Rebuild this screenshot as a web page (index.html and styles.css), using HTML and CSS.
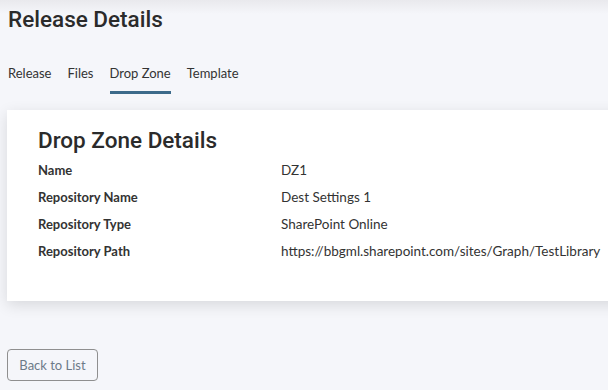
FILE: index.html
```html
<!DOCTYPE html>
<html lang="en">

<head>
    <meta charset="UTF-8">
    <meta name="viewport" content="width=device-width, initial-scale=1.0">
    <title>Release Details</title>
    <link rel="stylesheet" href="styles.css">
</head>

<body>
    <div class="pageWrapper">
        <h1 class="pageTitle">Release Details</h1>

        <!-- Abas -->
        <nav class="tabs">
            <a class="tab">Release</a>
            <a class="tab">Files</a>
            <a class="tab active">Drop Zone</a>
            <a class="tab">Template</a>
        </nav>

        <div class="card">
            <h2 class="cardTitle">Drop Zone Details</h2>
            <dl class="details">
                <dt>Name</dt>
                <dd>DZ1</dd>
                <dt>Repository Name</dt>
                <dd>Dest Settings 1</dd>
                <dt>Repository Type</dt>
                <dd>SharePoint Online</dd>
                <dt>Repository Path</dt>
                <dd>https://bbgml.sharepoint.com/sites/Graph/TestLibrary</dd>
            </dl>
        </div>

        <button class="backButton">Back to List</button>
    </div>
</body>

</html>
```

FILE: styles.css
```css
html,
body {
    margin: 0;
    height: 100%;
    overflow: hidden;
}

body {
    font-family: Lato, "Open Sans", sans-serif;
    font-size: 13px;
    color: #333;
    background: linear-gradient(#e9e9ed 0, #f5f6fa 14px) no-repeat;
    background-color: #f5f6fa;
}

.pageWrapper {
    padding: 0 7px;
    width: 594px;
}

.pageTitle {
    font-family: Roboto, sans-serif;
    font-weight: 500;
    font-size: 22.5px;
    color: #2b2b2b;
    margin: 0;
    padding: 6px 0 0 1px;
    line-height: 26px;
}

/* Abas */
.tabs {
    display: flex;
    gap: 16px;
    margin-top: 33px;
    padding-left: 1px;
}

.tab {
    color: #333;
    line-height: 16px;
    padding-bottom: 10px;
    border-bottom: 3px solid transparent;
    cursor: pointer;
}

.tab.active {
    border-bottom-color: #3c6a8a;
}

.card {
    background-color: #fff;
    margin-top: 16px;
    margin-right: -40px;
    padding: 16px 31px 42px;
    box-shadow: 0 4px 14px rgba(0, 0, 0, 0.12);
}

.cardTitle {
    font-family: Roboto, sans-serif;
    font-weight: 500;
    font-size: 22.5px;
    color: #2b2b2b;
    margin: 0;
    line-height: 28px;
}

.details {
    display: grid;
    grid-template-columns: 243px 1fr;
    row-gap: 11px;
    margin: 8px 0 0;
    line-height: 16px;
}

.details dt {
    font-weight: bold;
}

.details dd {
    margin: 0;
    font-size: 13.5px;
    color: #333;
}

.backButton {
    margin-top: 48px;
    width: 91px;
    height: 32px;
    font-family: Lato, sans-serif;
    font-size: 13px;
    color: #6d7a88;
    background-color: transparent;
    border: 1px solid #8f8f8f;
    border-radius: 4px;
    cursor: pointer;
}
```
